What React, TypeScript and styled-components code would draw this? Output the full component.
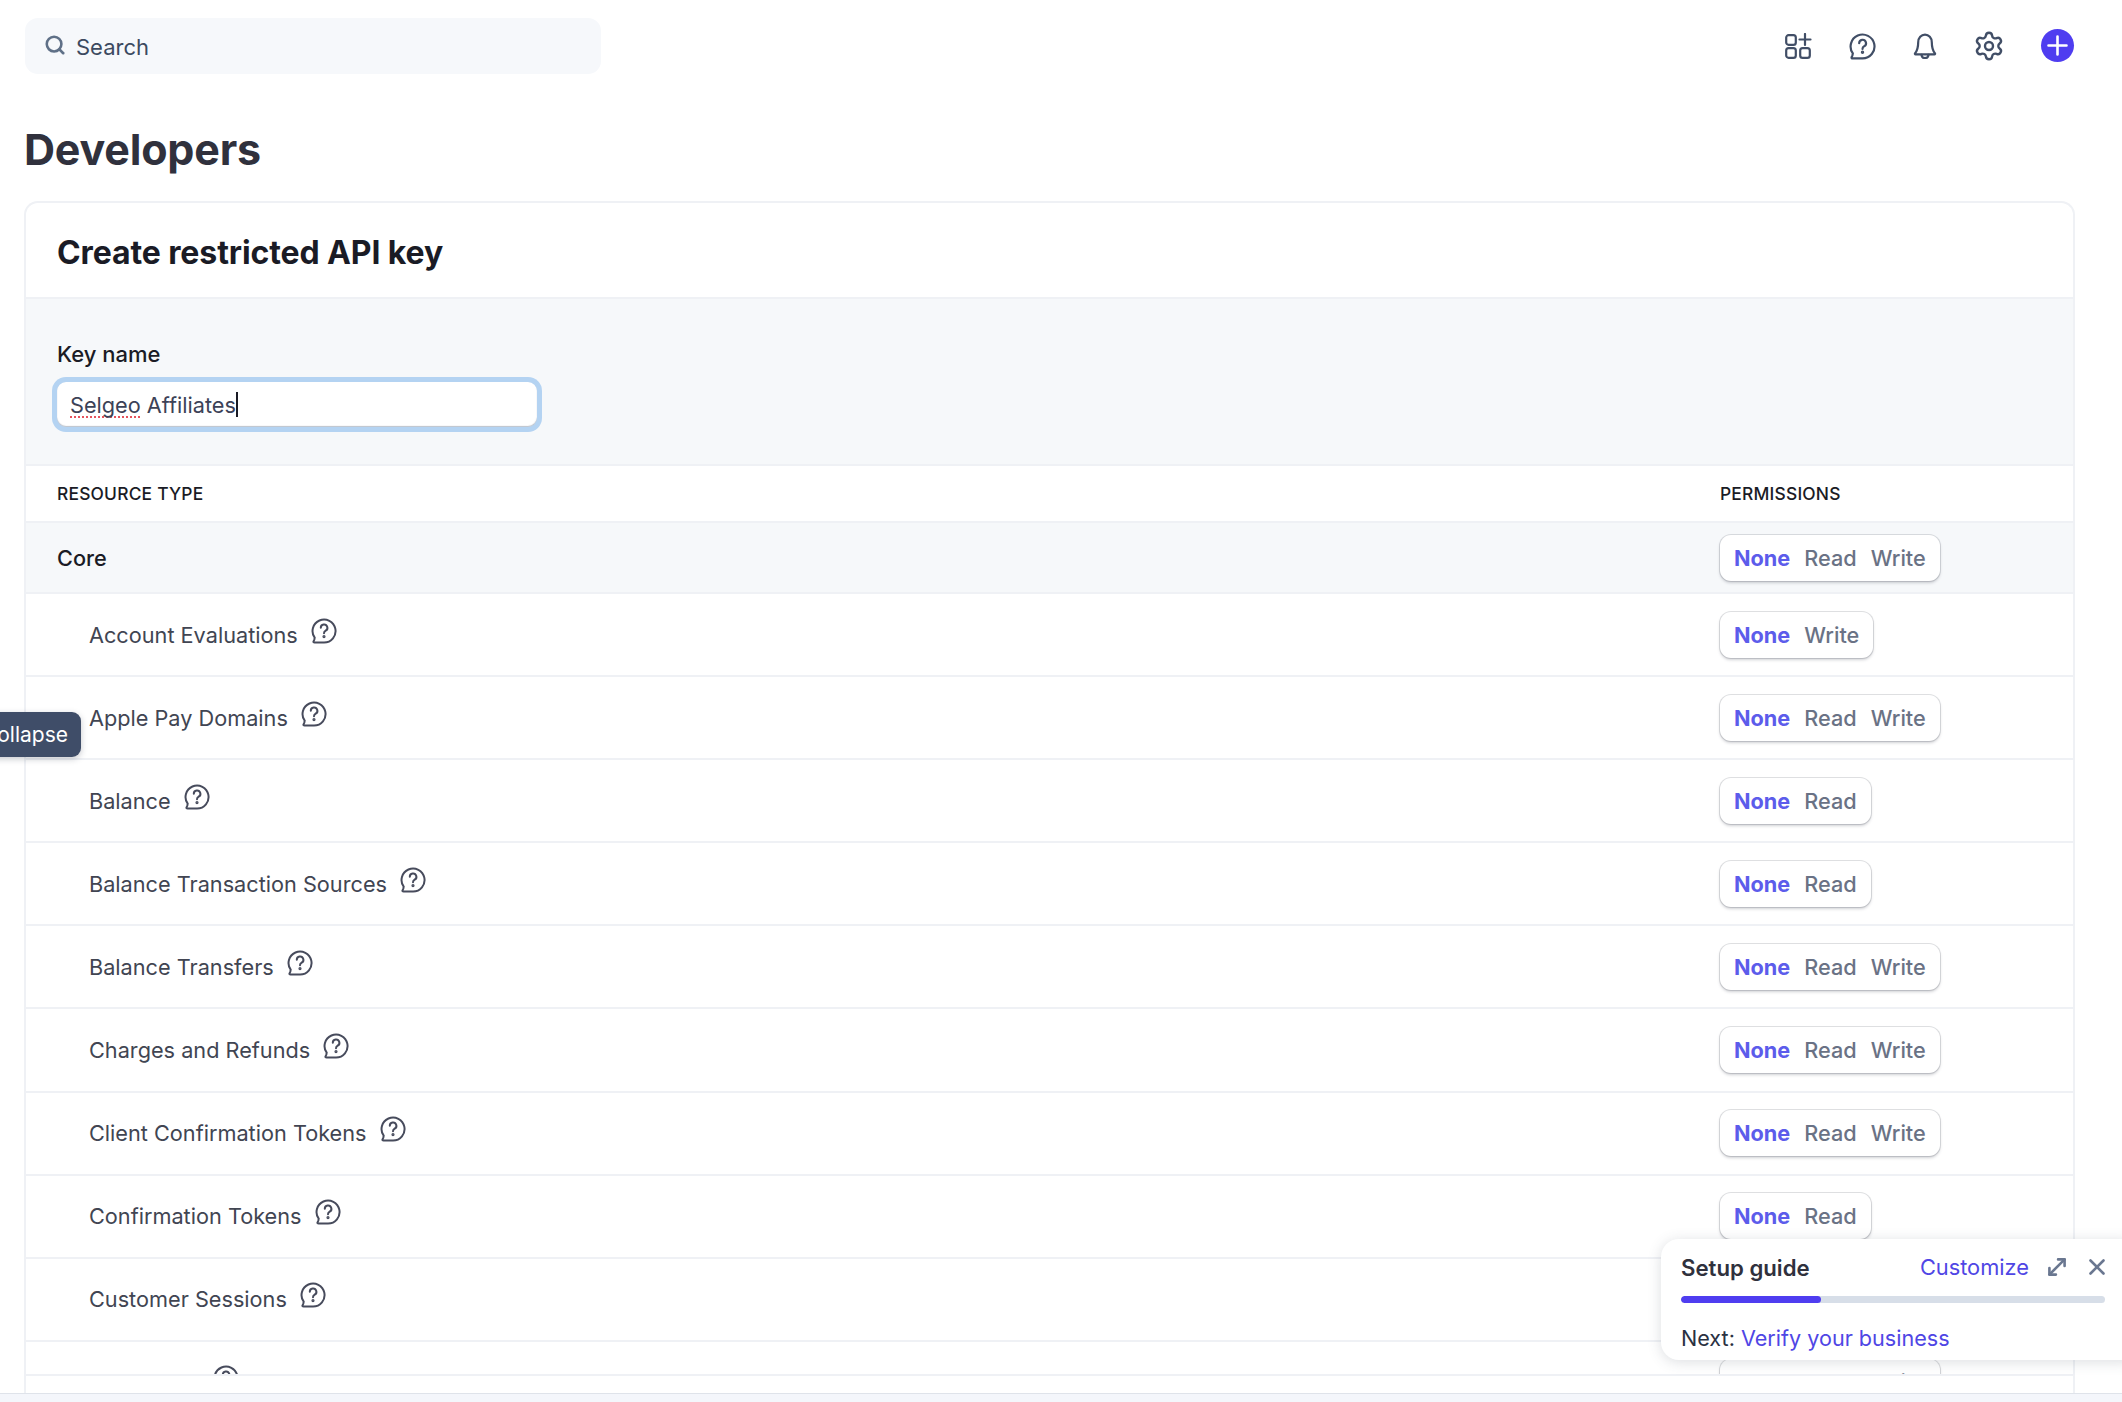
import React from "react";
import styled, { createGlobalStyle } from "styled-components";
import { Search, Settings, MoveDiagonal, X } from "lucide-react";

const Global = createGlobalStyle`
  html, body { margin: 0; padding: 0; background: #fff; }
  body { font-family: Inter, "Liberation Sans", sans-serif; overflow: hidden; }
  * { box-sizing: border-box; }
`;

const Page = styled.div`
  position: relative;
  width: 2122px;
  height: 1402px;
  overflow: hidden;
  display: flex;
  flex-direction: column;
  background: #fff;
`;

const TopBar = styled.header`
  height: 92px;
  flex: none;
  padding: 18px 48px 0 25px;
  display: flex;
  justify-content: space-between;
  align-items: flex-start;
`;

const SearchBox = styled.div`
  width: 576px;
  height: 56px;
  border-radius: 13px;
  background: #f6f8fb;
  display: flex;
  align-items: center;
  gap: 10px;
  padding-left: 19px;
  color: #3c4a60;
  font-size: 22px;
  line-height: 28px;
  padding-top: 1px;
  svg { color: #5f7087; margin-top: -4px; }
`;

const TopIcons = styled.div`
  display: flex;
  align-items: center;
  height: 56px;
  gap: 37px;
  color: #414e66;
`;

const GearIcon = styled(Settings)`
  margin: 0 -1px;
`;

const PlusCircle = styled.div`
  width: 33px;
  height: 33px;
  border-radius: 50%;
  background: #4f3df0;
  display: flex;
  align-items: center;
  justify-content: center;
  margin-top: -2px;
`;

const Title = styled.h1`
  margin: 0;
  padding: 29px 0 0 24px;
  height: 109px;
  flex: none;
  font-size: 43px;
  line-height: 56px;
  font-weight: 700;
  letter-spacing: -0.2px;
  color: #30313d;
`;

const Card = styled.section`
  flex: 1;
  min-height: 0;
  margin: 0 47px 0 24px;
  border: 2px solid #eff1f5;
  border-bottom: none;
  border-radius: 14px 14px 0 0;
  display: flex;
  flex-direction: column;
  background: #fff;
`;

const CardHead = styled.div`
  height: 96px;
  flex: none;
  padding: 4px 31px 0;
  display: flex;
  align-items: center;
  border-bottom: 2px solid #eff1f5;
  font-size: 32px;
  font-weight: 700;
  letter-spacing: -0.1px;
  color: #1a1b25;
`;

const KeySection = styled.div`
  height: 167px;
  flex: none;
  background: #f6f8fa;
  border-bottom: 2px solid #eff1f5;
  padding: 41px 0 0 31px;
`;

const KeyLabel = styled.div`
  font-size: 22px;
  line-height: 28px;
  font-weight: 500;
  color: #1a1b25;
`;

const KeyInput = styled.div`
  width: 480px;
  height: 45px;
  margin: 14px 0 0 0;
  border-radius: 9px;
  background: #fff;
  box-shadow: 0 0 0 5px #b4d3f2, inset 0 -1px 1px rgba(60, 80, 110, 0.35);
  display: flex;
  align-items: center;
  padding-left: 13px;
  font-size: 21.7px;
  color: #3c4257;
`;

const Misspelled = styled.span`
  text-decoration: underline dotted #e5535d 2px;
  text-underline-offset: 4px;
  text-decoration-skip-ink: none;
`;

const Caret = styled.span`
  display: inline-block;
  width: 2px;
  height: 25px;
  background: #1a1b25;
`;

const HeaderRow = styled.div`
  height: 57px;
  flex: none;
  display: grid;
  grid-template-columns: 1fr 353px;
  align-items: center;
  padding-left: 31px;
  border-bottom: 2px solid #eff1f5;
  font-size: 17.4px;
  letter-spacing: 0.2px;
  font-weight: 500;
  color: #1a1b25;
`;

const TableClip = styled.div`
  height: 853px;
  flex: none;
  overflow: hidden;
  border-bottom: 2px solid #eff1f5;
`;

const Row = styled.div<{ $group?: boolean }>`
  height: ${(p) => (p.$group ? 71 : 83.1)}px;
  display: grid;
  grid-template-columns: 1fr 353px;
  align-items: center;
  padding-left: ${(p) => (p.$group ? 31 : 63)}px;
  border-bottom: 2px solid #eff1f5;
  background: ${(p) => (p.$group ? "#f6f8fa" : "#fff")};
`;

const RowLabel = styled.div<{ $group?: boolean }>`
  display: flex;
  align-items: center;
  gap: 13px;
  font-size: 21.7px;
  font-weight: ${(p) => (p.$group ? 500 : 400)};
  color: ${(p) => (p.$group ? "#1a1b25" : "#414552")};
`;

const HelpWrap = styled.span`
  display: inline-flex;
  color: #474b5c;
  margin-top: -8px;
`;

const Segmented = styled.div`
  justify-self: start;
  height: 46px;
  display: inline-flex;
  align-items: center;
  gap: 14px;
  padding: 0 14px;
  border-radius: 11px;
  background: #fff;
  box-shadow: 0 0 0 1px rgba(64, 68, 82, 0.16), 0 2px 3px rgba(64, 68, 82, 0.25);
  font-size: 21.7px;
`;

const Option = styled.span<{ $active?: boolean }>`
  font-weight: ${(p) => (p.$active ? 700 : 500)};
  color: ${(p) => (p.$active ? "#5c5ceb" : "#6a7285")};
`;

const BottomStrip = styled.div`
  height: 9px;
  flex: none;
  background: #f4f6fb;
  border-top: 1.5px solid #dfe3ea;
  position: relative;
  z-index: 2;
`;

const Tooltip = styled.div`
  position: absolute;
  right: calc(100% - 81px);
  top: 712px;
  height: 45px;
  padding: 0 13px;
  border-radius: 9px;
  background: #3f4d68;
  color: #fff;
  font-size: 21px;
  display: flex;
  align-items: center;
  box-shadow: 0 2px 6px rgba(30, 40, 60, 0.25);
  z-index: 5;
`;

const Guide = styled.aside`
  position: absolute;
  left: 1661px;
  top: 1239px;
  width: 480px;
  height: 121px;
  border-radius: 18px;
  background: #fff;
  box-shadow: 0 2px 14px rgba(60, 70, 90, 0.18);
  padding: 0 36px 0 20px;
  z-index: 4;
  display: flex;
  flex-direction: column;
`;

const GuideHead = styled.div`
  display: flex;
  align-items: center;
  height: 54px;
  padding-top: 2px;
  margin-right: -5px;
  font-size: 21.8px;
`;

const GuideTitle = styled.span`
  font-weight: 600;
  font-size: 22.2px;
  color: #30313d;
  flex: 1;
`;

const GuideLink = styled.span`
  color: #4f46e5;
`;

const GuideIcons = styled.div`
  display: flex;
  align-items: center;
  gap: 14px;
  margin-left: 15px;
  color: #6a7790;
`;

const Track = styled.div`
  height: 7px;
  border-radius: 4px;
  background: #d7dee8;
  overflow: hidden;
  margin-top: 3px;
`;

const Fill = styled.div`
  height: 100%;
  border-radius: 4px;
  background: #4f3df0;
`;

const GuideNext = styled.div`
  margin-top: 22px;
  font-size: 21.6px;
  color: #2a3142;
`;

const HelpIcon = ({ size = 26, sw = 2 }: { size?: number; sw?: number }) => (
  <svg width={size} height={size} viewBox="0 0 26 26" fill="none" stroke="currentColor" strokeWidth={sw} strokeLinecap="round" strokeLinejoin="round">
    <path d="M13 24.5H3.500c-.9 0-1.300-.6-.9-1.300l.7-1.600c.2-.5.1-1 .4-1.900A11.500 11.500 0 1 1 13 24.500z" />
    <path d="M9.800 9.800a3.300 3.300 0 1 1 4.900 2.900c-1 .6-1.700 1.300-1.700 2.600" />
    <circle cx="13" cy="18.600" r=".6" fill="currentColor" />
  </svg>
);

const AppsIcon = () => (
  <svg width="27" height="26" viewBox="0 0 27 26" fill="none" stroke="currentColor" strokeWidth="2.2" strokeLinecap="round" strokeLinejoin="round">
    <rect x="1.200" y="2.200" width="9.600" height="9.600" rx="2.400" />
    <rect x="1.200" y="15.200" width="9.600" height="9.600" rx="2.400" />
    <rect x="15.200" y="15.200" width="9.600" height="9.600" rx="2.400" />
    <path d="M14.500 6.500h11M20 1v11" />
  </svg>
);

const BellIcon = () => (
  <svg width="24" height="26" viewBox="0 0 24 26" fill="none" stroke="currentColor" strokeWidth="2.2" strokeLinecap="round" strokeLinejoin="round">
    <path d="M5.200 9.200a6.800 7.600 0 0 1 13.600 0c0 6 .6 8 3.200 11.200.3.5 0 1-.5 1H2.500c-.5 0-.8-.5-.5-1C4.600 17.200 5.200 15.200 5.200 9.200z" />
    <path d="M8.500 21.800c.2 2 1.600 3.200 3.500 3.200s3.300-1.200 3.500-3.200" />
  </svg>
);

type Perm = "RW" | "W" | "R";
const rows: { name: string; perm: Perm }[] = [
  { name: "Account Evaluations", perm: "W" },
  { name: "Apple Pay Domains", perm: "RW" },
  { name: "Balance", perm: "R" },
  { name: "Balance Transaction Sources", perm: "R" },
  { name: "Balance Transfers", perm: "RW" },
  { name: "Charges and Refunds", perm: "RW" },
  { name: "Client Confirmation Tokens", perm: "RW" },
  { name: "Confirmation Tokens", perm: "R" },
  { name: "Customer Sessions", perm: "RW" },
  { name: "Customers", perm: "RW" },
];

const Perms = ({ perm }: { perm: Perm }) => (
  <Segmented>
    <Option $active>None</Option>
    {perm !== "W" && <Option>Read</Option>}
    {perm !== "R" && <Option>Write</Option>}
  </Segmented>
);

export default function App() {
  return (
    <Page>
      <Global />
      <TopBar>
        <SearchBox>
          <Search size={22} strokeWidth={2.8} />
          Search
        </SearchBox>
        <TopIcons>
          <AppsIcon />
          <HelpIcon size={27} sw={2.1} />
          <BellIcon />
          <GearIcon size={32} strokeWidth={1.8} />
          <PlusCircle>
            <svg width="21" height="21" viewBox="0 0 21 21" stroke="#fff" strokeWidth="2.6" strokeLinecap="round">
              <path d="M10.500 1.500v18M1.500 10.500h18" />
            </svg>
          </PlusCircle>
        </TopIcons>
      </TopBar>
      <Title>Developers</Title>
      <Card>
        <CardHead>Create restricted API key</CardHead>
        <KeySection>
          <KeyLabel>Key name</KeyLabel>
          <KeyInput>
            <Misspelled>Selgeo</Misspelled>&nbsp;Affiliates
            <Caret />
          </KeyInput>
        </KeySection>
        <HeaderRow>
          <span>RESOURCE TYPE</span>
          <span>PERMISSIONS</span>
        </HeaderRow>
        <TableClip>
          <Row $group>
            <RowLabel $group>Core</RowLabel>
            <Perms perm="RW" />
          </Row>
          {rows.map((r) => (
            <Row key={r.name}>
              <RowLabel>
                {r.name}
                <HelpWrap>
                  <HelpIcon />
                </HelpWrap>
              </RowLabel>
              <Perms perm={r.perm} />
            </Row>
          ))}
        </TableClip>
      </Card>
      <BottomStrip />
      <Tooltip>Collapse</Tooltip>
      <Guide>
        <GuideHead>
          <GuideTitle>Setup guide</GuideTitle>
          <GuideLink>Customize</GuideLink>
          <GuideIcons>
            <MoveDiagonal size={26} strokeWidth={2.4} />
            <X size={26} strokeWidth={2.4} />
          </GuideIcons>
        </GuideHead>
        <Track>
          <Fill style={{ width: "33%" }} />
        </Track>
        <GuideNext>
          Next: <GuideLink>Verify your business</GuideLink>
        </GuideNext>
      </Guide>
    </Page>
  );
}
